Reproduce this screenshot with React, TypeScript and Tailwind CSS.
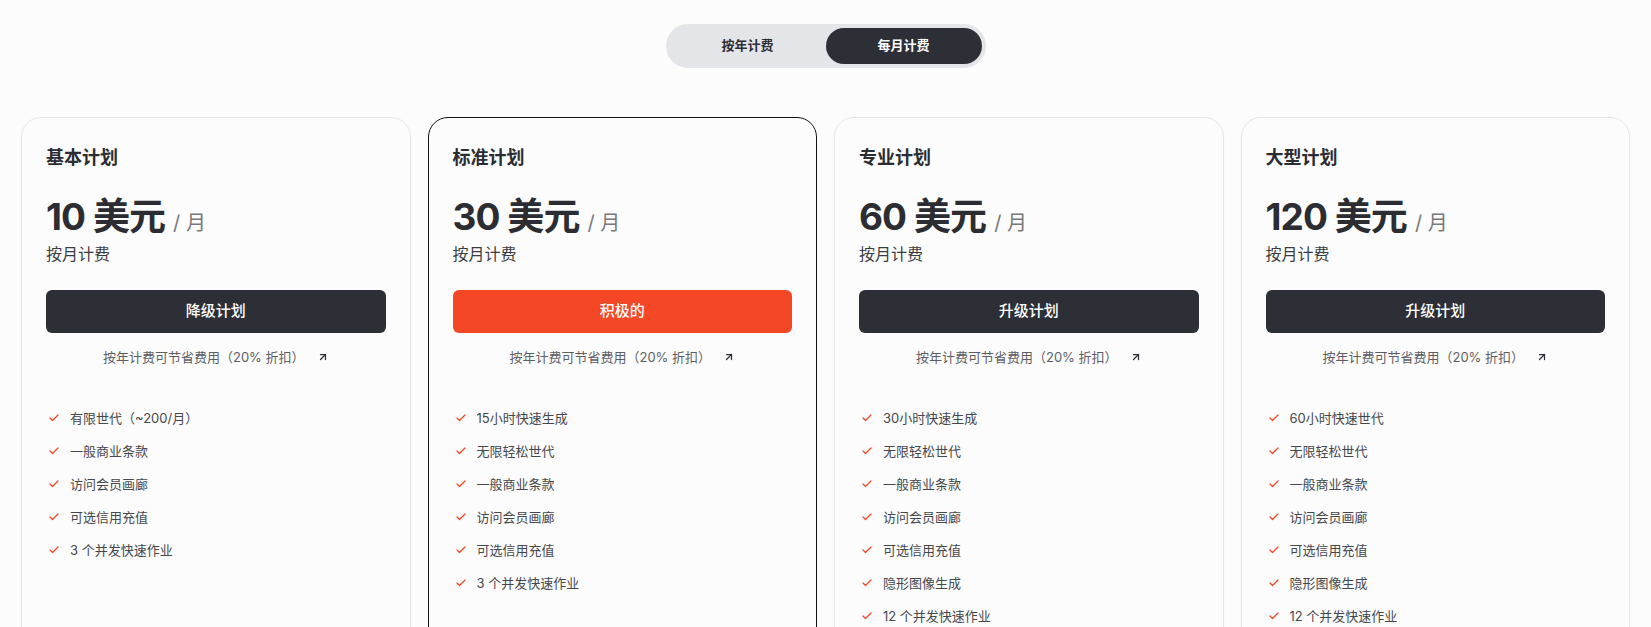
import React, { useState } from 'react';
import { Check, ArrowUpRight } from 'lucide-react';

type Plan = {
  name: string;
  price: number;
  action: string;
  current?: boolean;
  features: string[];
};

const plans: Plan[] = [
  {
    name: '基本计划',
    price: 10,
    action: '降级计划',
    features: ['有限世代（~200/月）', '一般商业条款', '访问会员画廊', '可选信用充值', '3 个并发快速作业'],
  },
  {
    name: '标准计划',
    price: 30,
    action: '积极的',
    current: true,
    features: ['15小时快速生成', '无限轻松世代', '一般商业条款', '访问会员画廊', '可选信用充值', '3 个并发快速作业'],
  },
  {
    name: '专业计划',
    price: 60,
    action: '升级计划',
    features: ['30小时快速生成', '无限轻松世代', '一般商业条款', '访问会员画廊', '可选信用充值', '隐形图像生成', '12 个并发快速作业'],
  },
  {
    name: '大型计划',
    price: 120,
    action: '升级计划',
    features: ['60小时快速世代', '无限轻松世代', '一般商业条款', '访问会员画廊', '可选信用充值', '隐形图像生成', '12 个并发快速作业'],
  },
];

const PlanCard = ({ plan }: { plan: Plan }) => (
  <div
    className={`rounded-[20px] border bg-[#fcfcfc] px-6 pt-6 pb-10 ${
      plan.current ? 'border-[#111214]' : 'border-[#e6e6e8] shadow-[0_1px_3px_rgba(0,0,0,0.04)]'
    }`}
  >
    <h2 className="text-lg font-bold leading-7 text-[#2b2d33] mt-[2px]">{plan.name}</h2>

    <div className="mt-[25px] flex items-baseline">
      <span className="text-[37px] font-bold leading-10 text-[#2b2d33] tracking-tight">{plan.price} 美元</span>
      <span className="ml-2 text-xl text-[#77787d]">/ 月</span>
    </div>
    <p className="mt-[5px] text-base leading-6 text-[#3a3c42]">按月计费</p>

    {/* Action button */}
    <button
      className={`mt-6 h-[43px] w-full rounded-md text-[15px] font-medium text-white ${
        plan.current ? 'bg-[#f44726]' : 'bg-[#2d2f37]'
      }`}
    >
      {plan.action}
    </button>

    <div className="mt-[14px] flex items-center justify-center text-[13px] leading-5 text-[#5c5e64]">
      <span>按年计费可节省费用（20% 折扣）</span>
      <ArrowUpRight size={12} strokeWidth={2.5} className="ml-3 text-[#2d2f37]" />
    </div>

    <ul className="mt-[41px] flex flex-col gap-[13px]">
      {plan.features.map((f) => (
        <li key={f} className="flex items-center text-[13px] leading-5 text-[#45474d]">
          <Check size={12} strokeWidth={2.5} className="ml-[2px] mr-[10px] text-[#f44726]" />
          {f}
        </li>
      ))}
    </ul>
  </div>
);

export default function App() {
  const [billing, setBilling] = useState<'year' | 'month'>('month');

  return (
    <div
      className="min-h-screen bg-[#fcfcfc] pt-6"
      style={{ fontFamily: 'Inter, "Noto Sans CJK SC", sans-serif' }}
    >
      {/* Billing toggle */}
      <div className="flex justify-center">
        <div className="flex h-[44px] w-[320px] rounded-full bg-[#e4e5e9] p-1">
          <button
            onClick={() => setBilling('year')}
            className={`flex-1 rounded-full text-[13px] font-bold ${
              billing === 'year' ? 'bg-[#2d2f37] text-white' : 'text-[#2d2f37]'
            }`}
          >
            按年计费
          </button>
          <button
            onClick={() => setBilling('month')}
            className={`flex-1 rounded-full text-[13px] font-bold ${
              billing === 'month' ? 'bg-[#2d2f37] text-white' : 'text-[#2d2f37]'
            }`}
          >
            每月计费
          </button>
        </div>
      </div>

      {/* Plans */}
      <div className="mt-[49px] grid grid-cols-4 gap-[17px] px-[21px]">
        {plans.map((p) => (
          <PlanCard key={p.name} plan={p} />
        ))}
      </div>
    </div>
  );
}
